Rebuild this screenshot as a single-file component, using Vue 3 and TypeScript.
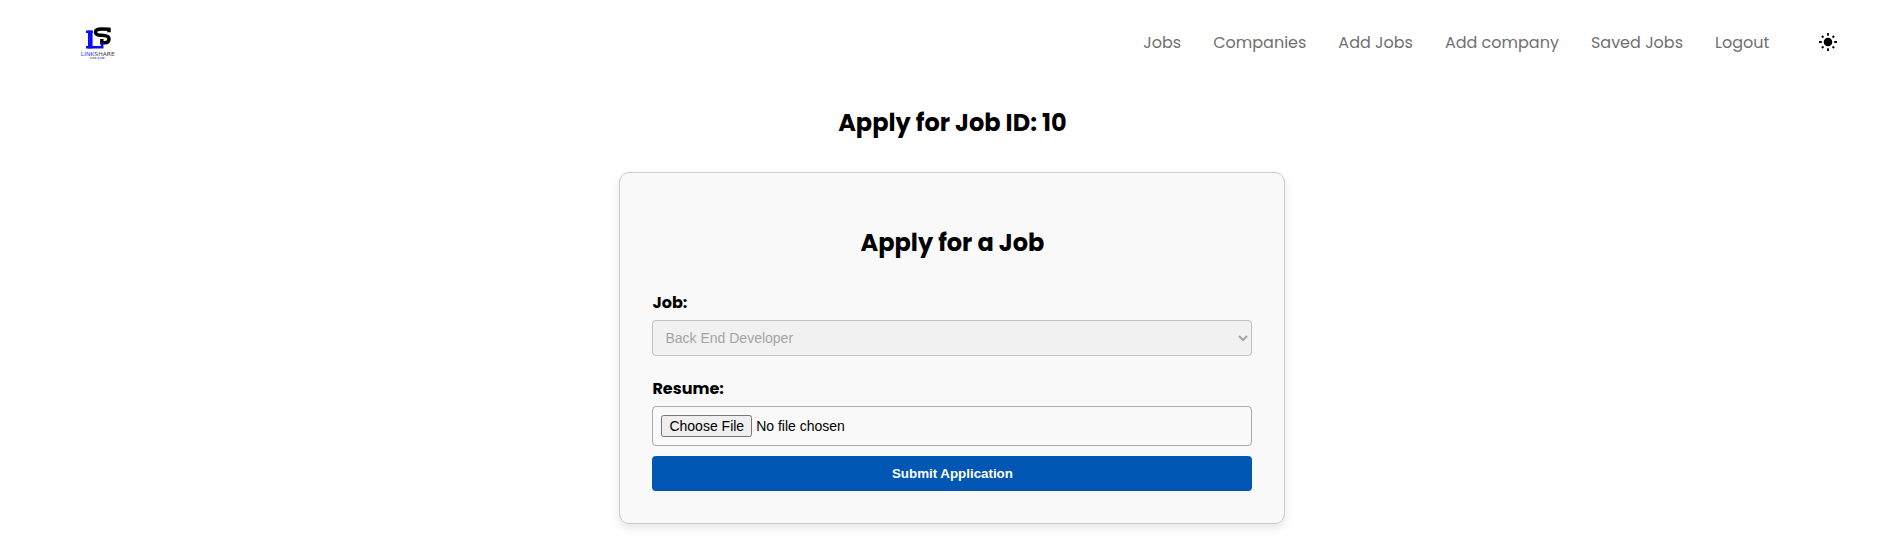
<script setup lang="ts">
interface NavLink {
  label: string
  key: string
}

const links: NavLink[] = [
  { label: 'Jobs', key: 'jobs' },
  { label: 'Companies', key: 'companies' },
  { label: 'Add Jobs', key: 'add-jobs' },
  { label: 'Add company', key: 'add-company' },
  { label: 'Saved Jobs', key: 'saved' },
  { label: 'Logout', key: 'logout' },
]
const jobId = 10
const jobTitle = 'Back End Developer'
</script>

<template>
  <div class="page">
    <header class="bar">
      <svg class="logo" width="40" height="40" viewBox="0 0 40 40" aria-label="LinkShare">
        <path d="M31 9.3V6.3Q28 5.9 23.5 5.9Q17.5 5.9 17.5 9.2Q17.5 12 23.5 12.3Q31 12.6 31 15.8Q31 19.8 27 19.8H23.8V16" fill="none" stroke="#000" stroke-width="3.5" />
        <path d="M8 8.8H14.7M8 24.2H24.2V19.5" fill="none" stroke="#0c0cfa" stroke-width="2.5" />
        <path d="M12.3 7.6V25.4" stroke="#0c0cfa" stroke-width="4.6" />
        <text class="word" x="2.8" y="33" textLength="34" lengthAdjust="spacingAndGlyphs"><tspan fill="#3d3dff">LINK</tspan><tspan fill="#444">SHARE</tspan></text>
        <text class="tag" x="12" y="36.2" textLength="14.5" lengthAdjust="spacingAndGlyphs"><tspan fill="#777">FIND</tspan><tspan fill="#5a5aff"> A JOB</tspan></text>
      </svg>
      <nav class="nav">
        <a v-for="link in links" :key="link.key" class="link">{{ link.label }}</a>
      </nav>
      <svg class="sun" width="20" height="20" viewBox="-10 -10 20 20">
        <circle r="4.3" />
        <path d="M0-9V-6.2M0 9V6.2M-9 0H-6.2M9 0H6.2M-6.2-6.2L-4.5-4.5M6.2-6.2L4.5-4.5M-6.2 6.2L-4.5 4.5M6.2 6.2L4.5 4.5" stroke="#000" stroke-width="1.8" />
      </svg>
    </header>
    <main class="content">
      <h2 class="title">Apply for Job ID: {{ jobId }}</h2>
      <form class="card" @submit.prevent>
        <h2 class="title inner">Apply for a Job</h2>
        <label class="label" for="job">Job:</label>
        <select id="job" class="select" disabled>
          <option>{{ jobTitle }}</option>
        </select>
        <label class="label second" for="resume">Resume:</label>
        <input id="resume" class="file" type="file" />
        <button class="submit" type="submit">Submit Application</button>
      </form>
    </main>
  </div>
</template>

<style>
html {
  overflow: hidden;
}
</style>

<style scoped>
.page {
  height: 538px;
  overflow: hidden;
  background: #fff;
  color: #000;
  font-family: Poppins, Inter, "Open Sans", sans-serif;
}
.bar {
  display: flex;
  align-items: center;
  height: 84px;
  padding: 0 45px 0 78px;
}
.logo {
  margin-top: 2px;
}
.word {
  font: 5.6px "DejaVu Sans", sans-serif;
}
.tag {
  font: bold 2.6px "DejaVu Sans", sans-serif;
}
.nav {
  display: flex;
  gap: 32px;
  margin: 2px 48.7px 0 auto;
}
.link {
  font-size: 16px;
  line-height: 24px;
  color: #707070;
  white-space: nowrap;
}
.content {
  width: 666px;
  margin-left: 619.45px;
}
.title {
  margin: 21px 0 31px;
  font-size: 24px;
  line-height: 36px;
  font-weight: 700;
  text-align: center;
}
.card {
  box-sizing: border-box;
  display: flex;
  flex-direction: column;
  height: 352px;
  padding: 0 32px;
  border: 1px solid #ccc;
  border-radius: 10px;
  background: #f9f9f9;
  box-shadow: 0 4px 8px rgba(0, 0, 0, 0.1);
}
.inner {
  margin: 52px 0 30px;
}
.label {
  height: 29px;
  font-size: 16px;
  line-height: 24px;
  font-weight: 700;
}
.second {
  margin-top: 21px;
}
.select {
  box-sizing: border-box;
  height: 36px;
  padding: 8px;
  border: 1px solid #aaa;
  border-radius: 4px;
  font: 14px "Liberation Sans", sans-serif;
}
.file {
  box-sizing: border-box;
  height: 40px;
  padding: 8px;
  border: 1px solid #aaa;
  border-radius: 4px;
  font: 14px "Liberation Sans", sans-serif;
}
.submit {
  height: 35px;
  margin-top: 10px;
  padding: 0;
  border: 0;
  border-radius: 4px;
  background: #0056b3;
  color: #fff;
  font: bold 13.333px "Liberation Sans", sans-serif;
}
</style>
